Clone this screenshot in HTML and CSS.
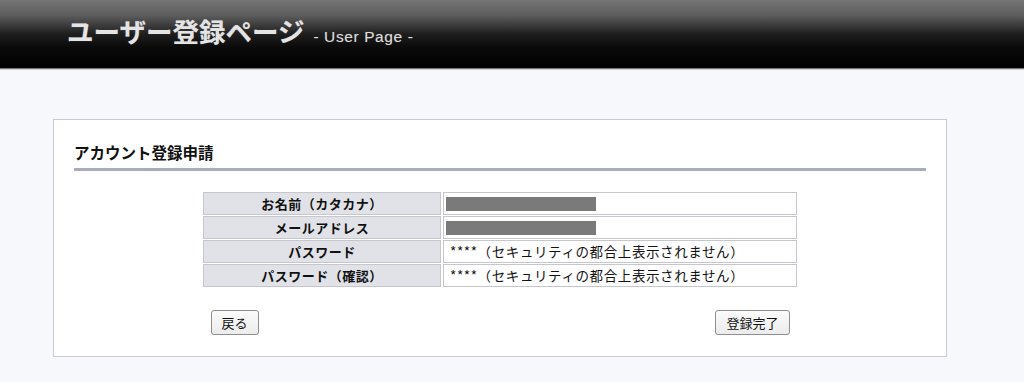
FILE: index.html
```html
<!DOCTYPE html>
<html lang="ja">
<head>
<meta charset="utf-8">
<title>ユーザー登録ページ</title>
<link rel="stylesheet" href="styles.css">
</head>
<body>
<header class="site-header">
  <h1 class="site-title">ユーザー登録ページ<span class="site-sub">- User Page -</span></h1>
</header>
<main class="card">
  <h2 class="card-title">アカウント登録申請</h2>
  <table class="confirm">
    <tr><th>お名前（カタカナ）</th><td><span class="masked"></span></td></tr>
    <tr><th>メールアドレス</th><td><span class="masked"></span></td></tr>
    <tr><th>パスワード</th><td>****（セキュリティの都合上表示されません）</td></tr>
    <tr><th>パスワード（確認）</th><td>****（セキュリティの都合上表示されません）</td></tr>
  </table>
  <div class="actions">
    <button class="btn" type="button">戻る</button>
    <button class="btn" type="button">登録完了</button>
  </div>
</main>
</body>
</html>
```
FILE: styles.css
```css
html, body {
  margin: 0;
  padding: 0;
}
body {
  background: #f7f8fc;
  font-family: "Noto Sans CJK JP", "Liberation Sans", sans-serif;
  color: #111;
}
.site-header {
  height: 68px;
  background: linear-gradient(to bottom, #747474 0%, #5e5e5e 22%, #1e1e1e 50%, #0a0a0a 70%, #000 100%);
  border-bottom: 1px solid #7a7a7a;
  box-shadow: 0 1px 0 #cfd0d6;
  display: flex;
  align-items: center;
  padding-left: 67px;
}
.site-title {
  margin: 0;
  font-size: 26.5px;
  font-weight: bold;
  color: #e4e4e4;
  line-height: 1;
  text-shadow: 0 0 1px rgba(255,255,255,0.3);
  display: flex;
  align-items: baseline;
  margin-top: -5px;
}
.site-sub {
  font-family: "Liberation Sans", "Noto Sans", sans-serif;
  font-size: 15.5px;
  font-weight: normal;
  color: #dcdcdc;
  margin-left: 9px;
  letter-spacing: 0.6px;
}
.card {
  display: block;
  width: 852px;
  margin: 50px 0 0 53px;
  background: #fff;
  border: 1px solid #c9cad2;
  padding: 0 20px 21px;
}
.card-title {
  margin: 0;
  padding: 22px 0 6px;
  font-size: 15.5px;
  line-height: 20px;
  font-weight: bold;
  border-bottom: 3px solid #a9adb8;
}
.confirm {
  width: 598px;
  margin: 20px auto 0;
  border-collapse: separate;
  border-spacing: 2px 1px;
  font-size: 13px;
}
.confirm th, .confirm td {
  height: 21px;
  padding: 0;
  border: 1px solid #c6c7cc;
  line-height: 21px;
}
.confirm th {
  width: 236px;
  background: #e1e2e7;
  font-weight: bold;
  text-align: center;
  letter-spacing: 0.5px;
}
.confirm td {
  background: #fff;
  padding-left: 6px;
  text-align: left;
  font-size: 13.5px;
  letter-spacing: 0.6px;
}
.masked {
  display: block;
  width: 150px;
  height: 14px;
  margin-left: -4px;
  background: #7a7a7a;
}
.actions {
  width: 579px;
  margin: 22px auto 0;
  display: flex;
  justify-content: space-between;
}
.btn {
  height: 25px;
  padding: 0 10px;
  font-family: "Noto Sans CJK JP", sans-serif;
  font-size: 13px;
  color: #111;
  background: linear-gradient(#fbfbfb, #ececec);
  border: 1px solid #8e8e8e;
  border-radius: 3px;
  line-height: 23px;
}
```
